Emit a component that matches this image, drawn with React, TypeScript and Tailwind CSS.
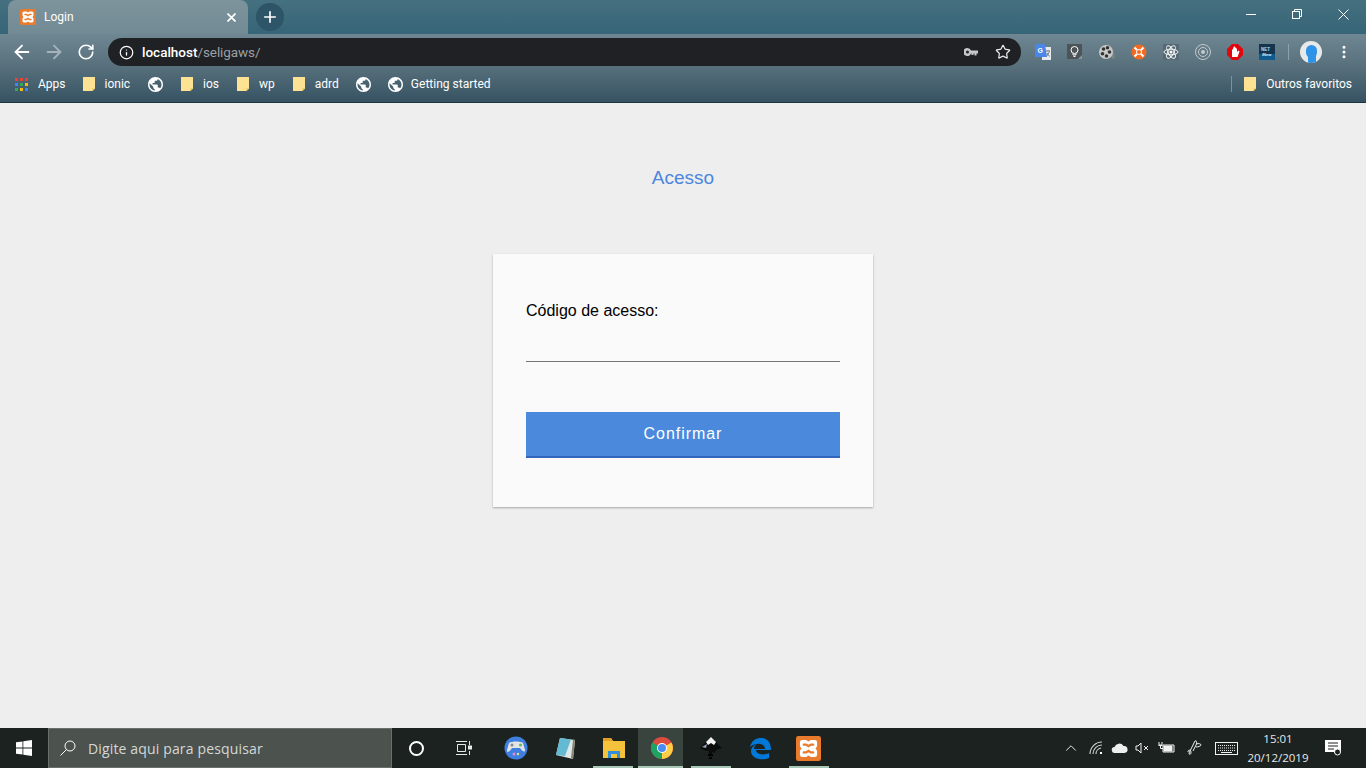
import { ArrowLeft, ArrowRight, RotateCw, Info, Star, Plus, EllipsisVertical, ChevronUp } from "lucide-react";

function Xampp({ size = 16 }: { size?: number }) {
  return (
    <svg width={size} height={size} viewBox="0 0 16 16">
      <rect width="16" height="16" rx="1.500" fill="#ea7a2c" />
      <path
        d="M4 2.500h2.500l1.500 1 1.500-1H12a1.500 1.500 0 0 1 1.500 1.500v2.500l-1 1.500 1 1.500V12a1.500 1.500 0 0 1-1.500 1.500H9.500l-1.500-1-1.500 1H4A1.500 1.500 0 0 1 2.500 12V9.500l1-1.500-1-1.500V4A1.500 1.500 0 0 1 4 2.500z"
        fill="#fff"
      />
      <path d="M5 5.500h1.500L8 6.500l1.500-1H11M5 10.500h1.500L8 9.500l1.500 1H11" fill="none" stroke="#ea7a2c" strokeWidth="1.500" strokeLinecap="round" />
    </svg>
  );
}

function Folder() {
  return (
    <svg width="12" height="14" viewBox="0 0 12 14" className="shrink-0">
      <path d="M0 0h12v11.500L9.500 14H0z" fill="#fde293" />
      <path d="M9.500 14v-2.500H12z" fill="#e8b93a" />
    </svg>
  );
}

function WorldIcon() {
  return (
    <svg width="15" height="15" viewBox="2 2 20 20" className="shrink-0">
      <path
        d="M12 2C6.480 2 2 6.480 2 12s4.480 10 10 10 10-4.480 10-10S17.520 2 12 2zm-1 17.930c-3.950-.490-7-3.850-7-7.930 0-.620.080-1.210.210-1.790L9 15v1c0 1.100.900 2 2 2v1.930zm6.900-2.540c-.260-.810-1-1.390-1.900-1.390h-1v-3c0-.550-.450-1-1-1H8v-2h2c.550 0 1-.450 1-1V7h2c1.100 0 2-.900 2-2v-.410c2.930 1.190 5 4.060 5 7.410 0 2.080-.800 3.970-2.100 5.390z"
        fill="#fff"
      />
    </svg>
  );
}

function Bookmark({ label }: { label: string }) {
  return (
    <div className="flex items-center gap-[10px]">
      <Folder />
      <span>{label}</span>
    </div>
  );
}

function AppsGrid() {
  const colors = ["#e94235", "#e94235", "#e94235", "#4285f4", "#34a853", "#fbbc05", "#34a853", "#fbbc05", "#4285f4"];
  return (
    <div className="grid grid-cols-3 gap-[2px] w-[13px] h-[13px]">
      {colors.map((c, i) => (
        <svg key={i} width="3" height="3"><rect width="3" height="3" fill={c} /></svg>
      ))}
    </div>
  );
}

function ExtensionIcons() {
  return (
    <div className="flex items-center gap-4 ml-[14px]">
      <svg width="16" height="16" viewBox="0 0 16 16">
        <rect x="7" y="3" width="9" height="13" fill="#e8eaed" />
        <path d="M11 7h4M13 6v1M11.500 12.500l3-5M12 9l2.500 3.500" stroke="#5f6368" fill="none" strokeWidth="0.800" />
        <path d="M0 0h10l2 13H0z" fill="#4a86e8" />
        <text x="2.500" y="8.500" fontSize="7" fontWeight="700" fill="#fff" fontFamily="Liberation Sans, sans-serif">G</text>
      </svg>
      <svg width="16" height="16" viewBox="0 0 16 16">
        <rect width="15" height="15" fill="#4d5458" />
        <circle cx="7.500" cy="6" r="3.500" fill="none" stroke="#fff" />
        <path d="M6 9.500v1.500h3V9.500M6.500 12.500h2" stroke="#fff" fill="none" />
        <path d="M11 15l4-4v4z" fill="#8b9296" />
      </svg>
      <svg width="16" height="16" viewBox="0 0 16 16">
        <path d="M7 0c5 0 8 4 9 14l-3 1z" fill="#7d8181" />
        <circle cx="7" cy="8" r="7" fill="#c7c9c9" />
        <circle cx="4.500" cy="5" r="1.800" fill="#333" />
        <circle cx="8.500" cy="3.800" r="1.800" fill="#333" />
        <circle cx="10.500" cy="8" r="1.800" fill="#333" />
        <circle cx="3.500" cy="9.800" r="1.800" fill="#333" />
        <circle cx="7.500" cy="12" r="1.800" fill="#333" />
      </svg>
      <svg width="16" height="16" viewBox="0 0 16 16">
        <circle cx="8" cy="8" r="7.500" fill="#f26b21" />
        <circle cx="8" cy="8" r="2.500" fill="none" stroke="#fff" />
        <path d="M3.500 3.500l2.500 2.500M12.500 3.500L10 6M3.500 12.500L6 10M12.500 12.500L10 10" stroke="#fff" strokeWidth="2" />
      </svg>
      <svg width="16" height="16" viewBox="0 0 16 16">
        <rect width="16" height="16" fill="#556a75" />
        <circle cx="8" cy="8" r="1.500" fill="#fff" />
        <ellipse cx="8" cy="8" rx="7" ry="2.800" fill="none" stroke="#fff" strokeWidth="0.900" />
        <ellipse cx="8" cy="8" rx="7" ry="2.800" fill="none" stroke="#fff" strokeWidth="0.900" transform="rotate(60 8 8)" />
        <ellipse cx="8" cy="8" rx="7" ry="2.800" fill="none" stroke="#fff" strokeWidth="0.900" transform="rotate(120 8 8)" />
      </svg>
      <svg width="16" height="16" viewBox="0 0 16 16">
        <circle cx="8" cy="8" r="7.500" fill="none" stroke="#c4c9cc" />
        <circle cx="8" cy="8" r="4.500" fill="none" stroke="#c4c9cc" />
        <circle cx="8" cy="8" r="2" fill="#c4c9cc" />
      </svg>
      <svg width="16" height="16" viewBox="0 0 16 16">
        <path d="M5 0h6l5 5v6l-5 5H5l-5-5V5z" fill="#e2060f" />
        <path d="M5 13V5.500h1V3.500h1V2.500h1V3.500h1v1h1V8l1.500-1.500 1 1L10.500 13z" fill="#fff" />
      </svg>
      <svg width="16" height="16" viewBox="0 0 16 16">
        <rect width="16" height="16" fill="#14344f" />
        <rect y="10" width="16" height="6" fill="#0f5a8e" />
        <text x="2" y="6.500" fontSize="4.500" fontWeight="700" fill="#c9d6df" fontFamily="Liberation Sans, sans-serif">NET</text>
        <text x="3" y="12" fontSize="4" fontWeight="700" fill="#e7eef3" fontFamily="Liberation Sans, sans-serif">iNew</text>
      </svg>
    </div>
  );
}

function TaskUnderline({ className }: { className: string }) {
  return <div className={`absolute bottom-0 h-[2px] bg-[#a9c7b5] ${className}`} />;
}

function TaskbarIcons() {
  return (
    <>
      <div className="w-[49px] flex justify-center">
        <svg width="24" height="24" viewBox="0 0 24 24">
          <circle cx="12" cy="12" r="11.500" fill="#3f7fe0" />
          <path d="M5 7c3-2 11-2 14 0l2 7c0 3-3 1-5-2H8c-2 3-5 6-5 2z" fill="#e4e4e4" />
          <circle cx="16.500" cy="9" r="1.500" fill="#5fb85a" />
          <circle cx="8" cy="9" r="1.500" fill="#888" />
          <circle cx="10" cy="18" r="1.500" fill="#e28ad0" />
          <circle cx="14" cy="18" r="1.200" fill="#e8e07a" />
        </svg>
      </div>
      <div className="w-[49px] flex justify-center">
        <svg width="24" height="24" viewBox="0 0 24 24">
          <path d="M7 2l15 2-2 19-17-4z" fill="#dfe8e8" />
          <path d="M7 2l11 1.500-6 16.500-9-1z" fill="#62bbd2" />
          <path d="M20 3.500l2 .500-2 19-2-1z" fill="#8a8672" />
        </svg>
      </div>
      <div className="relative w-[49px] h-full flex justify-center items-center">
        <svg width="22" height="20" viewBox="0 0 22 20">
          <path d="M0 0h8l2 3h12v17H0z" fill="#f5c33b" />
          <path d="M0 0h8l2 3H0z" fill="#e2a124" />
          <path d="M5 20v-7h12v7h-3v-4H8v4z" fill="#2f8fd8" />
        </svg>
        <TaskUnderline className="left-[4px] right-[5px]" />
      </div>
      <div className="relative w-[45px] h-full flex justify-center items-center pl-[3px] bg-[#3a443f]">
        <svg width="24" height="24" viewBox="0 0 24 24">
          <circle cx="12" cy="12" r="11" fill="#dd4b3e" />
          <path d="M12 12L2.500 6.500A11 11 0 0 0 12 23z" fill="#1ea362" />
          <path d="M12 12l9.500-5.500A11 11 0 0 1 12 23z" fill="#ffce44" />
          <circle cx="12" cy="12" r="5" fill="#fff" />
          <circle cx="12" cy="12" r="4" fill="#4a8af4" />
        </svg>
        <TaskUnderline className="left-0 right-0" />
      </div>
      <div className="relative w-[49px] h-full ml-[3px] flex justify-center items-center">
        <svg width="24" height="24" viewBox="0 0 24 24">
          <path d="M12 1l11 11-6 2-1 3-3-1v4h-3v-5l-5-1-4-2z" fill="#0b0d0d" />
          <path d="M12 1l5 5-2 3-3-2-3 2-2-3z" fill="#f4f4f4" />
          <path d="M3 11l5-3-1 4z" fill="#9aa3c0" />
          <path d="M9 18h5v2H9zM10 21h3v2h-3z" fill="#000" />
        </svg>
        <TaskUnderline className="left-[5px] right-[4px]" />
      </div>
      <div className="w-[49px] flex justify-center">
        <svg width="24" height="24" viewBox="0 0 24 24">
          <path d="M2 11C4 4 8 2 13 2c6 0 10 4 10 12H8c0 4 7 6 13 3v5c-7 3-18 1-18-7 0-3 3-6 6-7-2 1-3 3-3 5h11c0-6-9-7-15-2z" fill="#0078d7" />
        </svg>
      </div>
      <div className="relative w-[49px] h-full flex justify-center items-center">
        <Xampp size={25} />
        <TaskUnderline className="left-[5px] right-[4px]" />
      </div>
    </>
  );
}

function Tray() {
  return (
    <div className="flex items-center text-[#e8eaea] h-full">
      <ChevronUp size={18} strokeWidth={1.300} className="mr-[9px]" />
      <svg width="14" height="14" viewBox="0 0 14 14" fill="none" stroke="#d0d3d3" strokeWidth="1.100" className="mr-[8px]">
        <path d="M1 13a12 12 0 0 1 12-12M4 13a9 9 0 0 1 9-9M7 13a6 6 0 0 1 5-6" />
        <rect x="11" y="11" width="2" height="2" fill="#fff" stroke="none" />
      </svg>
      <svg width="17" height="10" viewBox="0 0 17 10" className="mr-[7px]">
        <path d="M4 10a3 3 0 0 1-.500-6 5 5 0 0 1 9-1A3.500 3.500 0 0 1 13.500 10z" fill="#eef0f0" />
      </svg>
      <svg width="15" height="12" viewBox="0 0 15 12" fill="none" stroke="#f0f2f2" className="mr-[8px]">
        <path d="M1 4h2l3-3v10L3 8H1zM9 4l4 4M13 4l-4 4" />
      </svg>
      <svg width="17" height="12" viewBox="0 0 17 12" fill="none" stroke="#f0f2f2" className="mr-[12px]">
        <path d="M1 0v3h3V0M0.500 3.500h4M2.500 3.500v3H5M5 3h11v7H5z" />
        <rect x="6" y="4" width="8" height="5" fill="#f0f2f2" />
      </svg>
      <svg width="16" height="16" viewBox="0 0 16 16" fill="none" stroke="#f0f2f2" className="mr-[12px]">
        <path d="M1 12c0-3 3-2 3 0 0 3-2 3-2 1L8 1c2-1 2 2 1 4l-3 6M9 4c3-1 5 0 5 1s-3 2-5 2" />
      </svg>
      <svg width="23" height="13" viewBox="0 0 23 13" fill="none" stroke="#f0f2f2" className="mr-[9px]">
        <rect x="0.500" y="0.500" width="22" height="12" />
        <path d="M3 3.500h17M3 6h17M3 8.500h17" strokeDasharray="1 1" />
        <path d="M6 10.500h11" />
      </svg>
      <div className="flex flex-col items-center w-[62px] text-[11.500px] leading-[19px] text-[#e6e8e8] -mt-[1px]">
        <span>15:01</span>
        <span>20/12/2019</span>
      </div>
      <div className="ml-[16px] mr-[25px]">
        <svg width="16" height="16" viewBox="0 0 16 16">
          <path d="M0 0h16v12h-3l-1 3-3-3H0z" fill="#fff" />
          <path d="M3 3h10M3 6h10M3 9h6" stroke="#1c2220" />
          <circle cx="12.500" cy="12" r="3" fill="#1b2220" stroke="#fff" strokeWidth="1" />
        </svg>
      </div>
    </div>
  );
}

export default function App() {
  return (
    <div className="w-[1366px] h-[768px] flex flex-col overflow-hidden bg-[#eeeeee] font-['Liberation_Sans',sans-serif]">
      <div className="h-[103px] shrink-0 flex flex-col border-b border-[#1e343f] font-['Roboto',sans-serif] text-[12px] text-white bg-[#3c6678]">
        {/* Tabs */}
        <div className="h-[34px] flex items-end bg-gradient-to-b from-[#45707f] to-[#366578] pl-2 relative">
          <div className="w-[240px] h-[34px] rounded-t-lg bg-gradient-to-b from-[#7e949d] to-[#718a94] flex items-center pl-3 pr-[10px]">
            <Xampp />
            <span className="ml-2 text-[12px] text-white">Login</span>
            <svg width="9" height="9" viewBox="0 0 9 9" className="ml-auto mr-[2px]" stroke="#fff" strokeWidth="1.700">
              <path d="M.500.500l8 8M8.500.500l-8 8" />
            </svg>
          </div>
          <div className="w-7 h-7 mb-[3px] ml-[8px] rounded-full bg-[#2d5467] flex items-center justify-center">
            <Plus size={18} strokeWidth={2.200} />
          </div>
          <div className="ml-auto flex h-full items-start text-white pt-[1px]">
            <div className="w-[46px] h-[26px] flex items-center justify-center">
              <div className="w-[10px] h-px bg-white" />
            </div>
            <div className="w-[46px] h-[26px] flex items-center justify-center">
              <svg width="10" height="10" viewBox="0 0 10 10" fill="none" stroke="#fff">
                <rect x="0.500" y="2.500" width="7" height="7" />
                <path d="M2.500 2.500v-2h7v7h-2" />
              </svg>
            </div>
            <div className="w-[46px] h-[26px] flex items-center justify-center">
              <svg width="11" height="11" viewBox="0 0 11 11" stroke="#fff">
                <path d="M.500.500l10 10M10.500.500l-10 10" />
              </svg>
            </div>
          </div>
        </div>

        {/* Toolbar */}
        <div className="h-[34px] flex items-center bg-gradient-to-b from-[#6f8792] to-[#566f7b] pl-[11px] pt-[2px]">
          <ArrowLeft size={22} strokeWidth={2} />
          <ArrowRight size={22} strokeWidth={2} className="ml-[10px] text-[#a5b3ba]" />
          <RotateCw size={18} strokeWidth={2.200} className="ml-[12px]" />
          <div className="ml-[13px] w-[913px] h-[28px] rounded-full bg-[#202124] flex items-center pl-[11px] pr-[10px]">
            <Info size={15} strokeWidth={2} />
            <span className="ml-[8px] text-[13.500px] font-medium">
              localhost<span className="text-[#9aa0a6] font-normal tracking-[-0.100px]">/seligaws/</span>
            </span>
            <svg width="14" height="8" viewBox="0 0 14 8" className="ml-auto">
              <path d="M3.500 0a4 4 0 0 1 3.500 2.500h7v3h-1.500v2h-2v-2h-1v1.500h-2v-1.500H7A4 4 0 1 1 3.500 0zm0 2.500a1.500 1.500 0 1 0 0 3 1.500 1.500 0 0 0 0-3z" fill="#c5c7c9" fillRule="evenodd" />
            </svg>
            <Star size={16} strokeWidth={1.800} className="ml-[17px] text-[#e8eaed]" />
          </div>
          <ExtensionIcons />
          <div className="w-px h-4 bg-[#8ea1aa] ml-[13px]" />
          <div className="relative w-[22px] h-[22px] ml-[11px] rounded-full bg-[#e8eaea] overflow-hidden">
            <div className="absolute left-[6px] top-[4px] w-[11px] h-[13px] rounded-full bg-[#2f93e8]" />
            <div className="absolute left-[8px] top-[14px] w-[8px] h-[8px] bg-[#2f93e8]" />
          </div>
          <EllipsisVertical size={16} strokeWidth={2.500} className="ml-[14px]" />
        </div>

        {/* Bookmarks */}
        <div className="flex-1 flex items-center bg-gradient-to-b from-[#566f7b] to-[#365262] pl-[15px] pr-[14px] pb-[2px]">
          <AppsGrid />
          <span className="ml-[10px]">Apps</span>
          <div className="ml-[17px]"><Bookmark label="ionic" /></div>
          <div className="ml-[18px]"><WorldIcon /></div>
          <div className="ml-[18px]"><Bookmark label="ios" /></div>
          <div className="ml-[18px]"><Bookmark label="wp" /></div>
          <div className="ml-[18px]"><Bookmark label="adrd" /></div>
          <div className="ml-[17px]"><WorldIcon /></div>
          <div className="ml-[17px] flex items-center gap-2"><WorldIcon /><span>Getting started</span></div>
          <div className="ml-auto w-px h-4 bg-[#7d929c]" />
          <div className="ml-[12px]"><Bookmark label="Outros favoritos" /></div>
        </div>
      </div>

      {/* Page */}
      <div className="flex-1 flex flex-col items-center">
        <h1 className="mt-[64px] text-[19px] leading-[22px] text-[#4a86de] font-normal">Acesso</h1>
        <div className="mt-[65px] w-[380px] h-[253px] bg-[#fafafa] shadow-[0_1px_2px_rgba(0,0,0,0.3)] px-[33px] pt-[47px]">
          <label className="block text-[16px] leading-[20px] text-black">Código de acesso:</label>
          <div className="h-[41px] border-b border-[#757575]" />
          <button className="mt-[50px] w-full h-[46px] bg-[#4a89dc] border-b-2 border-[#3465bd] text-[16px] tracking-[0.950px] text-white">
            Confirmar
          </button>
        </div>
      </div>

      {/* Taskbar */}
      <div className="h-[40px] shrink-0 flex items-center bg-[#1b2220] font-['Open_Sans',sans-serif]">
        <div className="w-[48px] flex justify-center">
          <svg width="16" height="16" viewBox="0 0 16 16" fill="#fff">
            <path d="M0 2.300l6.500-.9v6.200H0zM7.300 1.300L16 0v7.600H7.300zM0 8.400h6.500v6.200L0 13.700zM7.300 8.400H16V16l-8.700-1.200z" />
          </svg>
        </div>
        <div className="w-[344px] h-full bg-[#4c524e] border border-[#6a706c] flex items-center pl-[11px]">
          <svg width="16" height="16" viewBox="0 0 16 16" fill="none" stroke="#fff">
            <circle cx="10" cy="6" r="5" />
            <path d="M6.500 9.500l-6 6" />
          </svg>
          <span className="ml-[12px] text-[14px] tracking-[0.150px] text-[#d5d8d6]">Digite aqui para pesquisar</span>
        </div>
        <div className="w-[49px] flex justify-center">
          <div className="w-[15px] h-[15px] rounded-full border-2 border-white" />
        </div>
        <div className="w-[46px] flex justify-center mr-[4px]">
          <svg width="16" height="16" viewBox="0 0 16 16" fill="none" stroke="#e8eaea">
            <path d="M0 1.500h11M0 14.500h11M1.500 4.500h8v7h-8zM13.500 1v4M13.500 11v4" />
            <rect x="12.500" y="6" width="3" height="3" fill="#e8eaea" />
          </svg>
        </div>
        <div className="flex items-center h-full"><TaskbarIcons /></div>
        <div className="ml-auto h-full"><Tray /></div>
      </div>
    </div>
  );
}
